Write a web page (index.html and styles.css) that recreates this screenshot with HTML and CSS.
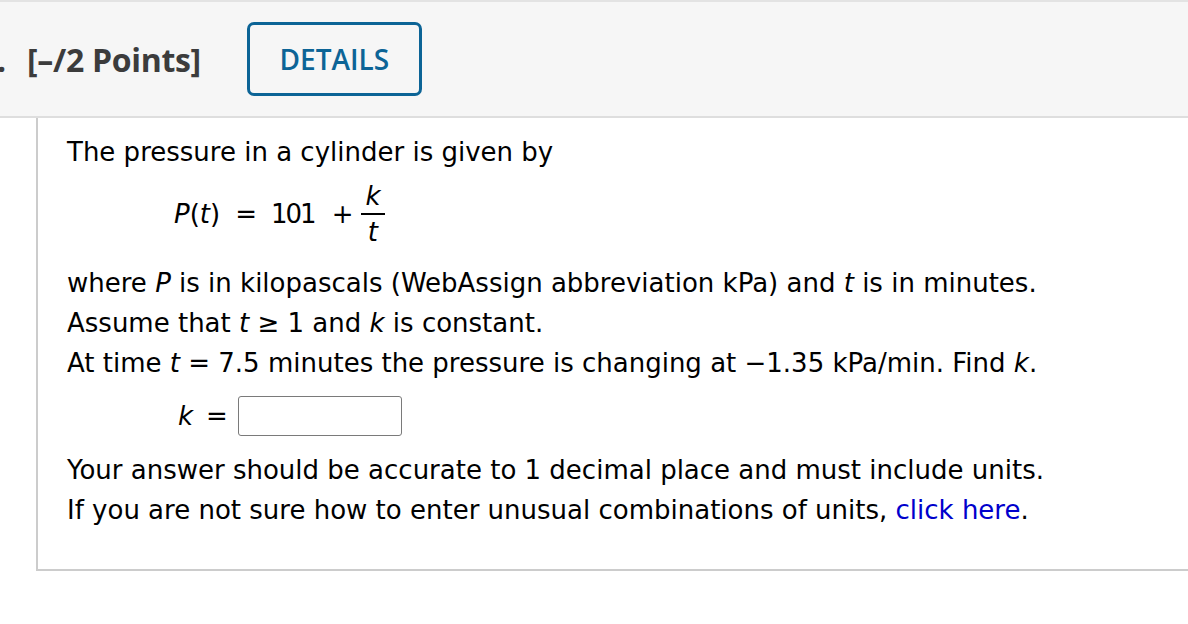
FILE: index.html
```html
<!DOCTYPE html>
<html>
<head>
<meta charset="utf-8">
<link rel="stylesheet" href="styles.css">
</head>
<body>
<div class="topline"></div>
<header class="qhead">
  <span class="qnum"><span>1.</span></span>
  <span class="points">[–/2 Points]</span>
  <button class="details">DETAILS</button>
</header>
<section class="qbody">
  <p class="line">The pressure in a cylinder is given by</p>
  <div class="eq">
    <span><span class="it">P</span>(<span class="it">t</span>)</span><span class="op">=</span><span class="numval">101</span><span class="op">+</span><span class="frac"><span class="num it">k</span><span class="den it">t</span></span>
  </div>
  <p class="line">where <span class="it">P</span> is in kilopascals (WebAssign abbreviation kPa) and <span class="it">t</span> is in minutes.</p>
  <p class="line">Assume that <span class="it">t</span> ≥ 1 and <span class="it">k</span> is constant.</p>
  <p class="line">At time <span class="it">t</span> = 7.5 minutes the pressure is changing at −1.35 kPa/min. Find <span class="it">k</span>.</p>
  <div class="answer">
    <span class="it">k</span><span class="eqsign">=</span><span class="box"></span>
  </div>
  <p class="line">Your answer should be accurate to 1 decimal place and must include units.</p>
  <p class="line">If you are not sure how to enter unusual combinations of units, <a class="link" href="#">click here</a>.</p>
</section>
</body>
</html>
```

FILE: styles.css
```css
html, body {
  margin: 0;
  padding: 0;
  background: #ffffff;
}
body {
  font-family: "DejaVu Sans", Verdana, sans-serif;
  color: #000;
  overflow: hidden;
}
.topline {
  height: 2px;
  background: #e3e3e3;
}
.qhead {
  background: #f6f6f6;
  border-bottom: 2px solid #dedede;
  display: flex;
  align-items: center;
  font-family: "Open Sans", sans-serif;
  box-sizing: border-box;
  height: 116px;
}
.qnum {
  display: flex;
  justify-content: flex-end;
  width: 6px;
  overflow: hidden;
  font-weight: 700;
  font-size: 32px;
  color: #3c3c3c;
  flex-shrink: 0;
}
.qnum span {
  flex-shrink: 0;
}
.points {
  font-weight: 700;
  font-size: 32px;
  color: #3c3c3c;
  margin-left: 21px;
  letter-spacing: -0.3px;
}
.details {
  margin-left: 46px;
  width: 175px;
  height: 74px;
  border: 3px solid #0c6496;
  border-radius: 7px;
  background: transparent;
  color: #0c6496;
  font-family: "Open Sans", sans-serif;
  font-weight: 600;
  font-size: 28px;
  padding: 0;
}
.qbody {
  margin-left: 36px;
  border-left: 2px solid #cccccc;
  border-bottom: 2px solid #cccccc;
  padding: 14px 0 39px 29px;
  font-size: 26px;
}
.line {
  margin: 0;
  line-height: 40px;
  white-space: nowrap;
}
.it { font-style: italic; }
.eq {
  display: flex;
  align-items: center;
  margin: 6px 0 13px 107px;
  height: 72px;
}
.numval { letter-spacing: -2px; margin-right: 2px; }
.op { margin: 0 14px 0 15px; }
.frac {
  display: inline-flex;
  flex-direction: column;
  align-items: center;
  margin-left: -6px;
  padding-top: 2px;
}
.frac .num {
  border-bottom: 2px solid #000;
  padding: 0 4px;
  line-height: 33px;
}
.frac .den {
  line-height: 35px;
}
.answer {
  display: flex;
  align-items: center;
  margin: 12px 0 13px 111px;
  height: 42px;
}
.eqsign { margin: 0 10px 0 13px; }
.box {
  width: 162px;
  height: 38px;
  border: 1.5px solid #7a7a7a;
  border-radius: 3px;
  background: #fff;
}
.link {
  color: #0000cc;
  text-decoration: none;
}
```
